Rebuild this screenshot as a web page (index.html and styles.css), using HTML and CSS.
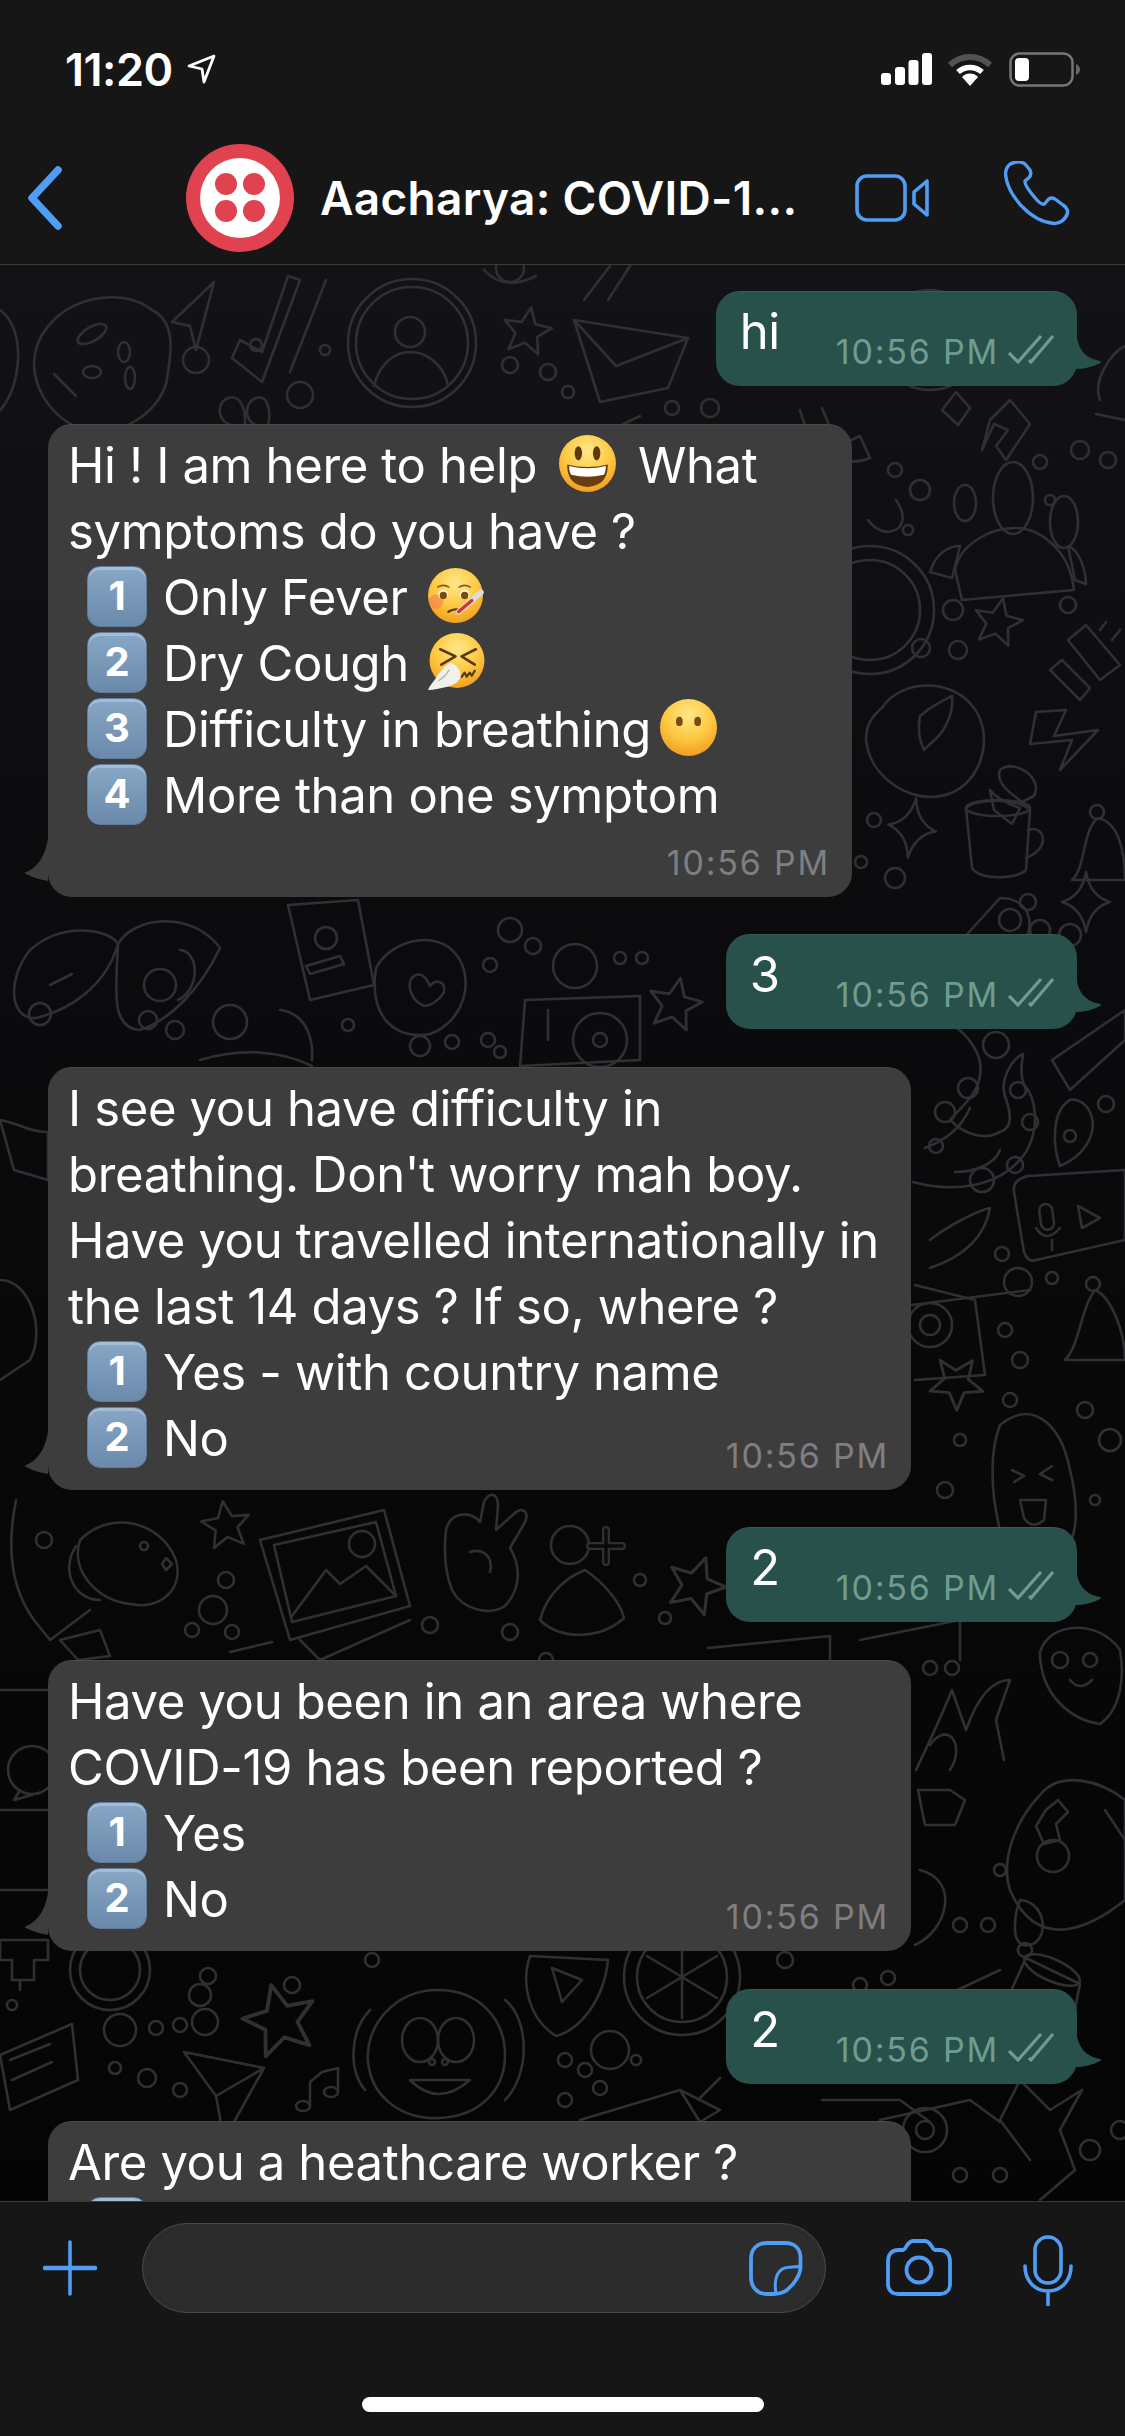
FILE: index.html
```html
<!DOCTYPE html>
<html lang="en">
<head>
<meta charset="utf-8">
<title>WhatsApp chat</title>
<link rel="stylesheet" href="styles.css">
</head>
<body>
<svg class="defs" width="0" height="0" aria-hidden="true">
  <defs>
    <radialGradient id="fg" cx=".5" cy=".28" r=".78">
      <stop offset="0" stop-color="#ffe889"/><stop offset=".55" stop-color="#fdc73f"/><stop offset="1" stop-color="#ee961c"/>
    </radialGradient>
    <symbol id="e-smile" viewBox="0 0 56 56">
      <circle cx="28" cy="28" r="28" fill="url(#fg)"/>
      <ellipse cx="19" cy="18" rx="3.6" ry="7" fill="#5b3a0e"/><ellipse cx="37" cy="18" rx="3.6" ry="7" fill="#5b3a0e"/>
      <path d="M8 29Q28 34 48 29Q48 50 28 51Q8 50 8 29Z" fill="#6b3c10"/>
      <path d="M10 30.5Q28 35 46 30.5Q46 37 44 39Q28 43 12 39Q10 37 10 30.5Z" fill="#fff"/>
    </symbol>
    <symbol id="e-fever" viewBox="0 0 56 56">
      <circle cx="28" cy="28" r="27" fill="url(#fg)"/>
      <circle cx="9" cy="34" r="7" fill="#f4794f" opacity=".55"/>
      <circle cx="16" cy="27" r="5" fill="#fff3c9"/><circle cx="16" cy="28" r="3.6" fill="#7a4a10"/>
      <circle cx="37" cy="27" r="5" fill="#fff3c9"/><circle cx="37" cy="28" r="3.6" fill="#7a4a10"/>
      <path d="M10 20Q16 16 22 20M31 20Q37 16 43 20" fill="none" stroke="#8a5a18" stroke-width="1.6"/>
      <path d="M21 44Q27 40 34 43" fill="none" stroke="#5b3a0e" stroke-width="2.2" stroke-linecap="round"/>
      <path d="M31 44L53 25" stroke="#d9dde0" stroke-width="5.500" stroke-linecap="round"/>
      <path d="M31 44L44 33" stroke="#d7312f" stroke-width="3.200" stroke-linecap="round"/>
    </symbol>
    <symbol id="e-sneeze" viewBox="0 0 56 56">
      <circle cx="28.500" cy="27" r="27" fill="url(#fg)"/>
      <path d="M12 16L27 23L13 31M47 16L33 23L46 31" fill="none" stroke="#5b3a0e" stroke-width="2.6" stroke-linecap="round" stroke-linejoin="round"/>
      <path d="M33 43l3-4 2 4 3-4 2 3 3-5" fill="none" stroke="#5b3a0e" stroke-width="2.200" stroke-linecap="round" stroke-linejoin="round"/>
      <path d="M0 56C3 49 7 47 9 42C12 38 17 32 22 29C27 31 33 36 32 43C30 49 24 52 18 53C12 54 6 56 0 56Z" fill="#f1f1ec"/>
      <path d="M10 47Q17 43 21 36" fill="none" stroke="#b9b9b2" stroke-width="1.4"/>
    </symbol>
    <symbol id="e-nomouth" viewBox="0 0 56 56">
      <circle cx="28" cy="28" r="28" fill="url(#fg)"/>
      <ellipse cx="19" cy="22" rx="3.3" ry="4.600" fill="#7a4a10"/><ellipse cx="37" cy="22" rx="3.3" ry="4.600" fill="#7a4a10"/>
    </symbol>
    <symbol id="ticks" viewBox="0 0 46 30">
      <path d="M1 18L10 27L33 1M21 25L23 27L45 1" fill="none" stroke="#6f9c90" stroke-width="3.200"/>
    </symbol>
    <path id="star" d="M0-24L7-8L24-7L11 4L15 21L0 12L-15 21L-11 4L-24-7L-7-8Z"/>
    <path id="spark" d="M0-30Q4-6 24 0Q4 6 0 30Q-4 6-24 0Q-4-6 0-30Z"/>
  </defs>
</svg>

<div class="app">
  <header class="top">
    <div class="status">
      <div class="clock">
        <span class="clock-time">11:20</span>
        <svg class="loc" width="30" height="30" viewBox="0 0 30 30"><path d="M27 2L2 12L15 15L17 28Z" fill="none" stroke="#fff" stroke-width="2.800" stroke-linejoin="round"/></svg>
      </div>
      <div class="sys">
        <svg width="51" height="33" viewBox="0 0 51 33"><rect x="0" y="21" width="10" height="12" rx="3" fill="#fff"/><rect x="14" y="15" width="10" height="18" rx="3" fill="#fff"/><rect x="27.500" y="8" width="10" height="25" rx="3" fill="#fff"/><rect x="41" y="1" width="10" height="32" rx="3" fill="#fff"/></svg>
        <svg width="46" height="34" viewBox="0 0 46 34"><path d="M3 13A29 29 0 0 1 43 13" fill="none" stroke="#525252" stroke-width="6"/><path d="M11 20A18 18 0 0 1 35 20" fill="none" stroke="#fff" stroke-width="5.500"/><path d="M23 34L15 25A11 11 0 0 1 31 25Z" fill="#fff"/></svg>
        <svg class="batt" width="72" height="35" viewBox="0 0 72 35"><rect x="1.500" y="1.500" width="62" height="32" rx="9" fill="none" stroke="#777" stroke-width="2.500"/><rect x="6" y="6" width="14" height="23" rx="4" fill="#fff"/><path d="M67 12Q71 14 71 17.500Q71 21 67 23Z" fill="#666"/></svg>
      </div>
    </div>
    <nav class="nav">
      <svg class="back" width="36" height="64" viewBox="0 0 36 64"><path d="M31 4L5 32L31 60" fill="none" stroke="#4f9df5" stroke-width="7.500" stroke-linecap="round" stroke-linejoin="round"/></svg>
      <svg class="avatar" width="108" height="108" viewBox="0 0 108 108"><circle cx="54" cy="54" r="54" fill="#e04250"/><circle cx="54" cy="54" r="40" fill="#fff"/><circle cx="40" cy="40" r="11" fill="#e04250"/><circle cx="68" cy="40" r="11" fill="#e04250"/><circle cx="40" cy="67" r="11" fill="#e04250"/><circle cx="68" cy="67" r="11" fill="#e04250"/></svg>
      <div class="title">Aacharya: COVID-1...</div>
      <svg class="video" width="75" height="48" viewBox="0 0 75 48"><rect x="2" y="2" width="48" height="44" rx="10" fill="none" stroke="#4f9df5" stroke-width="3.600"/><path d="M72 7V41L59 30V18Z" fill="none" stroke="#4f9df5" stroke-width="3.600" stroke-linejoin="round"/></svg>
      <svg class="phone" width="66" height="65" viewBox="0 0 66 65"><path d="M10 1.500C5 2.500 1.500 7 1.500 13C3 33 25 60 50 62.500C56 63 62 58 63.500 52C64 48 62 46 59 44L51 38C47.500 36 45 37 43 40L40.500 43C38 44 35.500 42 32 38C26 31 20 23 21 20L24.500 17C27 15 27.500 12.500 26 9L21 3C18 .5 14 .5 10 1.500Z" fill="none" stroke="#4f9df5" stroke-width="3.400" stroke-linejoin="round"/></svg>
    </nav>
  </header>

  <main class="chat">
    <svg class="doodles" viewBox="0 265 1125 1936" width="1125" height="1936" aria-hidden="true">
      <g fill="none" stroke="#303034" stroke-width="2.600" stroke-linecap="round" stroke-linejoin="round">
        <!-- top band -->
        <path d="M52 322C74 296 126 288 152 310C176 322 172 352 166 384C156 414 122 436 88 430C58 424 36 396 34 366C34 348 40 334 52 322Z"/>
        <ellipse cx="92" cy="334" rx="16" ry="7" transform="rotate(-30 92 334)"/><ellipse cx="124" cy="352" rx="6" ry="10"/><ellipse cx="92" cy="372" rx="9" ry="6"/><ellipse cx="130" cy="378" rx="5" ry="11"/><path d="M54 374L76 396"/>
        <path d="M214 282L172 322L190 326L196 350Z"/><path d="M232 358L262 382L300 280L288 276L262 352L240 340Z"/><path d="M290 372L326 280"/>
        <circle cx="412" cy="343" r="64"/><circle cx="412" cy="343" r="56"/><circle cx="410" cy="332" r="15"/><path d="M374 386C380 362 396 352 410 352C426 352 444 364 448 386"/>
        <use href="#star" transform="translate(527 331) rotate(10)"/>
        <path d="M574 320L688 338L668 388L600 402Z"/><path d="M574 320L616 366L688 338"/><path d="M584 300L610 266M608 300L630 266"/>
        <path d="M484 270Q504 292 536 276"/><circle cx="510" cy="268" r="14"/>
        <path d="M245 425C220 432 212 405 228 398C240 394 246 408 245 425ZM268 425C246 432 240 404 256 398C266 394 272 408 268 425Z"/>
        <circle cx="196" cy="360" r="13"/><circle cx="256" cy="345" r="6"/><circle cx="300" cy="395" r="13"/><circle cx="325" cy="350" r="5"/><circle cx="510" cy="365" r="8"/><circle cx="548" cy="372" r="8"/><circle cx="568" cy="392" r="6"/><circle cx="672" cy="408" r="7"/><circle cx="710" cy="408" r="9"/>
        <path d="M590 440L640 416M800 410C810 450 840 470 870 458L860 436L838 446L822 408"/>
        <path d="M942 410L958 425L970 408L956 392ZM990 420L1010 400L1030 424L1006 460L996 446L1008 430L994 424L982 450Z"/>
        <path d="M1100 400C1092 380 1112 352 1125 346"/><path d="M1096 414L1125 420"/><circle cx="930" cy="340" r="50"/>
        <path d="M0 310C28 330 20 390 0 410"/>
        <!-- right of bubble one -->
        <ellipse cx="965" cy="503" rx="11" ry="18"/><ellipse cx="1013" cy="498" rx="20" ry="36"/><ellipse cx="1064" cy="522" rx="14" ry="26"/>
        <path d="M955 570C960 544 990 528 1015 528C1040 528 1070 550 1074 590L962 600Z"/><path d="M930 572C936 552 950 546 960 546L952 578ZM1068 546C1080 550 1086 572 1086 584L1075 580Z"/>
        <path d="M868 520C886 544 916 528 896 500"/><circle cx="870" cy="610" r="50"/><circle cx="870" cy="610" r="64"/>
        <use href="#star" transform="translate(998 622) rotate(12)"/><circle cx="953" cy="610" r="10"/><circle cx="1068" cy="605" r="8"/><circle cx="921" cy="648" r="9"/><circle cx="958" cy="650" r="9"/>
        <circle cx="895" cy="470" r="7"/><circle cx="920" cy="490" r="10"/><circle cx="1040" cy="462" r="7"/><circle cx="1080" cy="450" r="9"/><circle cx="1108" cy="460" r="8"/><circle cx="908" cy="530" r="5"/><circle cx="1050" cy="500" r="5"/>
        <path d="M1068 640L1086 625L1120 665L1100 680ZM1100 630L1106 622M1112 640L1120 630M1062 660L1090 688L1080 700L1050 670Z"/>
        <path d="M882 708C900 680 950 676 974 708C996 738 980 790 940 796C910 802 870 778 866 740C866 725 872 716 882 708Z"/>
        <path d="M920 716C934 704 948 698 952 696C954 712 946 732 930 744L924 750C918 738 918 726 920 716Z"/>
        <path d="M1036 712L1066 710L1054 736L1098 730L1060 770L1072 740L1030 744Z"/>
        <path d="M1000 770C1014 758 1044 778 1034 796L1022 802C1006 790 996 782 1000 770ZM990 790C998 800 1014 806 1020 808L1012 824L994 810Z"/>
        <path d="M966 808C975 798 1020 798 1030 810L1026 870C1016 880 980 880 972 868Z"/><ellipse cx="998" cy="808" rx="32" ry="8"/><path d="M1028 830C1044 824 1052 848 1026 858"/>
        <path d="M1098 818C1118 822 1125 850 1125 880H1072C1086 868 1082 830 1098 818Z"/><circle cx="1097" cy="812" r="7"/>
        <use href="#spark" transform="translate(912 828) rotate(8)"/><use href="#spark" transform="translate(1086 902)"/>
        <circle cx="874" cy="820" r="7"/><circle cx="861" cy="862" r="6"/><circle cx="895" cy="878" r="10"/><circle cx="1040" cy="930" r="10"/><circle cx="1070" cy="935" r="11"/><circle cx="1028" cy="902" r="8"/>
        <path d="M1000 898C1026 898 1040 920 1020 950C1008 970 992 990 982 1010L960 942Z"/><circle cx="1010" cy="920" r="11"/>
        <!-- mid left -->
        <path d="M30 950C64 920 110 930 118 944C106 986 70 1010 36 1018C10 1020 6 980 30 950Z"/><path d="M50 985L72 974"/><path d="M118 944C134 916 192 910 220 948C200 990 170 1020 140 1030C110 1028 116 990 118 944Z"/><path d="M180 950C200 952 200 990 178 1000"/><circle cx="160" cy="985" r="16"/>
        <path d="M288 905L358 900L374 985L310 1000Z"/><circle cx="326" cy="938" r="11"/><path d="M306 966L340 956L344 964L310 974Z"/>
        <circle cx="510" cy="930" r="12"/><circle cx="533" cy="946" r="8"/><circle cx="575" cy="966" r="22"/><circle cx="620" cy="958" r="6"/><circle cx="642" cy="958" r="6"/><circle cx="490" cy="965" r="7"/>
        <path d="M376 968C390 942 430 930 452 950C476 972 468 1020 430 1034C398 1040 368 1020 376 968Z"/><path d="M424 1006C410 1000 404 980 416 975C424 972 428 982 430 986C436 978 446 982 444 992C440 1000 430 1006 424 1006Z"/>
        <circle cx="148" cy="1020" r="9"/><circle cx="175" cy="1030" r="9"/><circle cx="230" cy="1022" r="17"/><circle cx="40" cy="1014" r="11"/><circle cx="348" cy="1025" r="6"/><circle cx="488" cy="1040" r="7"/>
        <path d="M525 1000L640 996L640 1060L520 1066ZM548 1010V1040"/><circle cx="600" cy="1040" r="27"/><circle cx="600" cy="1040" r="7"/>
        <use href="#star" transform="translate(675 1004) rotate(12) scale(1.100)"/>
        <path d="M280 1010C300 1012 314 1030 312 1060"/><path d="M200 1060C240 1048 280 1050 312 1066"/>
        <circle cx="420" cy="1046" r="10"/><circle cx="452" cy="1042" r="7"/><circle cx="500" cy="1052" r="6"/>
        <path d="M0 1120C22 1124 28 1132 48 1132V1180L14 1170Z"/><path d="M0 1280C30 1280 46 1330 30 1360L0 1380"/>
        <!-- right tentacle -->
        <path d="M913 1182C950 1192 1000 1190 1026 1152C1042 1124 1034 1095 1024 1085C1018 1070 1024 1055 1023 1054C1010 1060 1000 1082 1005 1096C1012 1116 1012 1128 1000 1132C986 1140 966 1136 950 1120C964 1104 984 1090 980 1062C976 1044 960 1028 952 1026"/>
        <path d="M925 1148C945 1140 960 1130 970 1108M955 1172C975 1172 995 1164 1000 1150"/><circle cx="968" cy="1088" r="10"/><circle cx="945" cy="1112" r="10"/><circle cx="936" cy="1146" r="7"/><circle cx="1018" cy="1090" r="8"/><circle cx="1030" cy="1122" r="8"/><circle cx="1015" cy="1165" r="8"/><circle cx="982" cy="1180" r="12"/>
        <path d="M1070 1100C1052 1110 1052 1144 1060 1166C1080 1158 1100 1136 1090 1112C1086 1104 1078 1098 1070 1100Z"/><circle cx="1070" cy="1136" r="6"/>
        <path d="M1052 1060L1125 1010V1040L1070 1090Z"/><circle cx="1106" cy="1104" r="8"/><circle cx="996" cy="1045" r="13"/>
        <path d="M1028 1176L1125 1170V1240L1036 1260C1030 1262 1026 1258 1024 1252L1014 1192C1012 1182 1020 1178 1028 1176Z"/><rect x="1040" y="1204" width="13" height="26" rx="6.500" transform="rotate(-8 1046 1216)"/><path d="M1036 1228Q1046 1244 1060 1228M1052 1240V1250M1078 1206L1100 1218L1082 1228Z"/>
        <path d="M930 1240C950 1224 980 1210 990 1208C985 1236 966 1256 930 1268"/><circle cx="1002" cy="1254" r="7"/><circle cx="1018" cy="1282" r="14"/><circle cx="1052" cy="1278" r="6"/>
        <path d="M912 1305L1030 1290M1095 1290C1110 1296 1125 1330 1125 1360H1065C1080 1345 1080 1310 1095 1290Z"/><circle cx="1093" cy="1284" r="7"/>
        <path d="M915 1285L975 1300L985 1375L915 1380"/><circle cx="930" cy="1325" r="22"/><circle cx="930" cy="1325" r="10"/>
        <use href="#star" transform="translate(957 1382) rotate(36) scale(1.100)"/><circle cx="1020" cy="1360" r="8"/><circle cx="1005" cy="1330" r="7"/><circle cx="1010" cy="1400" r="7"/>
        <path d="M1000 1425C1030 1400 1060 1420 1070 1470C1080 1510 1076 1540 1066 1545L1000 1530C990 1490 990 1450 1000 1425Z"/><path d="M1012 1470L1024 1476L1014 1482M1052 1466L1040 1474L1052 1480M1020 1500H1046L1044 1520Q1032 1530 1024 1518Z"/>
        <circle cx="960" cy="1440" r="6"/><circle cx="945" cy="1490" r="8"/><circle cx="1110" cy="1440" r="11"/><circle cx="1085" cy="1410" r="8"/><circle cx="1095" cy="1500" r="5"/>
        <!-- lower left -->
        <path d="M16 1500C6 1550 12 1590 34 1620L50 1640L90 1610"/><path d="M80 1540C110 1510 160 1520 176 1560C184 1590 160 1610 130 1604C96 1600 70 1570 80 1540Z"/><path d="M76 1546C60 1570 74 1600 100 1600"/><circle cx="144" cy="1546" r="4"/><path d="M166 1558l6 6-6 6-4-6z"/>
        <use href="#star" transform="translate(226 1525) rotate(-8)"/><circle cx="44" cy="1540" r="8"/><circle cx="213" cy="1610" r="14"/><circle cx="226" cy="1580" r="8"/><circle cx="192" cy="1630" r="7"/><circle cx="232" cy="1632" r="7"/>
        <path d="M260 1540L384 1510L410 1606L290 1640Z"/><path d="M274 1545L376 1522L396 1596L292 1622Z"/><path d="M292 1616L326 1570L340 1584L366 1566L396 1596"/><circle cx="362" cy="1544" r="13"/><path d="M300 1640L320 1660L410 1620"/>
        <path d="M446 1530C450 1512 470 1510 480 1522L484 1502C490 1490 498 1494 498 1506L496 1530L516 1512C524 1506 530 1514 524 1524L510 1548C522 1568 520 1590 505 1606C490 1616 462 1610 452 1590C444 1570 444 1548 446 1530Z"/><path d="M470 1552C482 1548 494 1556 490 1572"/>
        <circle cx="570" cy="1545" r="19"/><path d="M540 1620C548 1590 570 1576 585 1570C600 1580 620 1600 624 1618C600 1640 560 1640 540 1620Z"/><path d="M606 1530V1562M590 1546H622" stroke-width="8"/><path d="M606 1530V1562M590 1546H622" stroke="#0a0a0b" stroke-width="3.400"/>
        <use href="#star" transform="translate(696 1585) rotate(20) scale(1.200)"/><circle cx="665" cy="1618" r="6"/><circle cx="640" cy="1580" r="6"/>
        <circle cx="430" cy="1625" r="8"/><circle cx="510" cy="1632" r="8"/><circle cx="546" cy="1660" r="7"/>
        <path d="M60 1640L100 1630L110 1656L78 1660ZM230 1652L272 1642"/><path d="M708 1648L830 1636L830 1660M860 1640L960 1620L960 1660"/>
        <circle cx="930" cy="1668" r="7"/><circle cx="952" cy="1668" r="7"/>
        <!-- right lower -->
        <path d="M1040 1652C1050 1620 1100 1620 1120 1650C1125 1680 1120 1710 1100 1724C1072 1720 1040 1696 1040 1652Z"/><circle cx="1060" cy="1660" r="8"/><circle cx="1090" cy="1660" r="7"/><path d="M1070 1680Q1080 1692 1092 1680"/>
        <path d="M916 1770C930 1740 940 1720 952 1690L966 1730C980 1690 996 1680 1010 1680L996 1720L1004 1760"/><path d="M930 1745C948 1720 966 1745 950 1770"/><path d="M918 1790H950L965 1800L955 1825H925Z"/>
        <path d="M1040 1795C1060 1770 1100 1780 1125 1800V1900C1100 1920 1040 1960 1010 1890C1000 1860 1016 1820 1040 1795Z"/><path d="M1046 1810L1058 1800L1068 1812L1056 1824L1060 1840L1044 1844L1036 1826Z"/><circle cx="1053" cy="1856" r="16"/><path d="M1105 1810L1125 1840"/>
        <path d="M920 1870C960 1880 948 1930 915 1945M1020 1900C1050 1902 1050 1950 1022 1945C1010 1938 1016 1910 1020 1900Z"/>
        <circle cx="960" cy="1925" r="7"/><circle cx="988" cy="1925" r="7"/><circle cx="1000" cy="1870" r="6"/><circle cx="1025" cy="1950" r="7"/>
        <!-- left behind in3 -->
        <path d="M0 1690H48M0 1810H48M0 1890H48"/><circle cx="32" cy="1770" r="24"/><path d="M20 1790L14 1800L32 1795"/>
        <path d="M0 1940H48V1960H34V1980H12V1960H0ZM20 1980V1990"/>
        <!-- bottom band -->
        <circle cx="110" cy="1970" r="30"/><circle cx="110" cy="1970" r="40"/><circle cx="200" cy="1995" r="11"/><circle cx="208" cy="1976" r="8"/><circle cx="292" cy="1985" r="8"/><circle cx="372" cy="1960" r="7"/>
        <path d="M530 1956L608 1960C604 2000 580 2030 556 2036C530 2020 520 1985 530 1956Z"/><path d="M552 1968L582 1980L562 2002Z"/>
        <circle cx="682" cy="1977" r="58"/><circle cx="682" cy="1977" r="45"/><path d="M682 1977V1936M682 1977V2018M682 1977L647 1956M682 1977L717 1956M682 1977L647 1998M682 1977L717 1998"/>
        <circle cx="860" cy="1985" r="7"/><circle cx="888" cy="1978" r="7"/><circle cx="785" cy="1960" r="8"/>
        <path d="M1000 2015L1026 1958L1080 1984L1066 2054C1040 2060 1010 2050 1000 2015Z"/><ellipse cx="1052" cy="1970" rx="30" ry="11" transform="rotate(24 1052 1970)"/><path d="M936 2000L1000 1970"/>
        <use href="#star" transform="translate(280 2020) rotate(-14) scale(1.500)"/><circle cx="120" cy="2030" r="16"/><circle cx="156" cy="2028" r="7"/><circle cx="180" cy="2025" r="7"/><circle cx="205" cy="2022" r="13"/><circle cx="12" cy="2005" r="5"/>
        <path d="M0 2055L72 2024L78 2080L10 2110ZM10 2060L50 2044M12 2080L52 2062"/><circle cx="115" cy="2068" r="6"/><circle cx="147" cy="2078" r="9"/><circle cx="180" cy="2090" r="7"/>
        <path d="M184 2052L264 2068L224 2140L216 2096Z"/><path d="M216 2096L264 2068"/><path d="M310 2082L322 2072L338 2068V2090M310 2082V2104"/><ellipse cx="303" cy="2106" rx="7" ry="5"/><ellipse cx="331" cy="2092" rx="7" ry="5"/>
        <path d="M438 1990C395 1990 365 2025 368 2062C372 2100 405 2120 440 2118C480 2116 505 2090 505 2055C505 2020 480 1990 438 1990Z"/><ellipse cx="420" cy="2040" rx="18" ry="22"/><ellipse cx="456" cy="2040" rx="18" ry="22"/><path d="M410 2080Q438 2108 470 2080Z"/><circle cx="432" cy="2062" r="3"/><circle cx="445" cy="2062" r="3"/><path d="M505 2000C530 2020 530 2075 505 2100M370 2010C350 2030 348 2070 365 2090"/>
        <circle cx="565" cy="2060" r="7"/><circle cx="585" cy="2070" r="7"/><circle cx="610" cy="2050" r="19"/><circle cx="636" cy="2060" r="5"/><circle cx="565" cy="2100" r="7"/><circle cx="600" cy="2088" r="7"/>
        <path d="M580 2120L680 2090L720 2110L700 2122M680 2090L700 2122"/><path d="M822 2100H900L930 2122M700 2098L720 2078"/>
        <path d="M880 2120L970 2100L1000 2122"/><circle cx="925" cy="2130" r="22"/><circle cx="925" cy="2130" r="9"/>
        <path d="M1000 2120L1020 2080L1050 2110L1082 2090L1060 2130L1075 2170L1040 2200M1000 2120L1030 2160"/><circle cx="1090" cy="2150" r="10"/><circle cx="1120" cy="2130" r="9"/><circle cx="1000" cy="2175" r="7"/><circle cx="960" cy="2175" r="7"/>
      </g>
    </svg>

    <div class="msg out"><span class="txt">hi</span><span class="time">10:56 PM</span><svg class="tick"><use href="#ticks"/></svg>
      <svg class="tail" width="26" height="40" viewBox="0 0 26 40"><path d="M0 0C1 18 8 28 24 31Q26 32 24 33C16 37 8 39 0 39Z"/></svg></div>

    <div class="msg in narrow">
      <div class="line">Hi ! I am here to help<svg class="emoji smile"><use href="#e-smile"/></svg>What</div>
      <div class="line">symptoms do you have ?</div>
      <div class="line"><span class="key">1</span>Only Fever<svg class="emoji after"><use href="#e-fever"/></svg></div>
      <div class="line"><span class="key">2</span>Dry Cough<svg class="emoji after"><use href="#e-sneeze"/></svg></div>
      <div class="line"><span class="key">3</span>Difficulty in breathing<svg class="emoji tight"><use href="#e-nomouth"/></svg></div>
      <div class="line"><span class="key">4</span>More than one symptom</div>
      <div class="stamp"><span class="time">10:56 PM</span></div>
      <svg class="tail" width="24" height="43" viewBox="0 0 24 43"><path d="M24 0C22 16 14 30 2 34Q0 35 2 36C10 40 18 42 24 43Z"/></svg>
    </div>

    <div class="msg out"><span class="txt">3</span><span class="time">10:56 PM</span><svg class="tick"><use href="#ticks"/></svg>
      <svg class="tail" width="26" height="40" viewBox="0 0 26 40"><path d="M0 0C1 18 8 28 24 31Q26 32 24 33C16 37 8 39 0 39Z"/></svg></div>

    <div class="msg in">
      <div class="line">I see you have difficulty in</div>
      <div class="line">breathing. Don't worry mah boy.</div>
      <div class="line">Have you travelled internationally in</div>
      <div class="line">the last 14 days ? If so, where ?</div>
      <div class="line"><span class="key">1</span>Yes - with country name</div>
      <div class="line last"><span><span class="key">2</span>No</span><span class="time">10:56 PM</span></div>
      <svg class="tail" width="24" height="43" viewBox="0 0 24 43"><path d="M24 0C22 16 14 30 2 34Q0 35 2 36C10 40 18 42 24 43Z"/></svg>
    </div>

    <div class="msg out"><span class="txt">2</span><span class="time">10:56 PM</span><svg class="tick"><use href="#ticks"/></svg>
      <svg class="tail" width="26" height="40" viewBox="0 0 26 40"><path d="M0 0C1 18 8 28 24 31Q26 32 24 33C16 37 8 39 0 39Z"/></svg></div>

    <div class="msg in">
      <div class="line">Have you been in an area where</div>
      <div class="line">COVID-19 has been reported ?</div>
      <div class="line"><span class="key">1</span>Yes</div>
      <div class="line last"><span><span class="key">2</span>No</span><span class="time">10:56 PM</span></div>
      <svg class="tail" width="24" height="43" viewBox="0 0 24 43"><path d="M24 0C22 16 14 30 2 34Q0 35 2 36C10 40 18 42 24 43Z"/></svg>
    </div>

    <div class="msg out"><span class="txt">2</span><span class="time">10:56 PM</span><svg class="tick"><use href="#ticks"/></svg>
      <svg class="tail" width="26" height="40" viewBox="0 0 26 40"><path d="M0 0C1 18 8 28 24 31Q26 32 24 33C16 37 8 39 0 39Z"/></svg></div>

    <div class="msg in">
      <div class="line">Are you a heathcare worker ?</div>
      <div class="line"><span class="key"></span></div>
    </div>
  </main>

  <footer class="bottom">
    <div class="composer">
      <svg class="plus" width="54" height="56" viewBox="0 0 54 56"><path d="M27 2V54" stroke="#4f9df5" stroke-width="3.600" stroke-linecap="round"/><path d="M2 28H52" stroke="#4f9df5" stroke-width="4.600" stroke-linecap="round"/></svg>
      <div class="field">
        <svg width="54" height="55" viewBox="0 0 54 55"><path d="M18 2H36C46 2 51.500 8 51.500 17V26C51.500 33 48 38 44 43L38 49C34 52 30 53 24 53H18C8 53 2 46 2 36V18C2 8 8 2 18 2Z" fill="none" stroke="#4f9df5" stroke-width="3.800"/><path d="M27 52C25 42 27 33 32 29C37 25 45 27 51 25" fill="none" stroke="#4f9df5" stroke-width="3"/></svg>
      </div>
      <svg class="cam" width="66" height="58" viewBox="0 0 66 58"><path d="M12 12H17C20 12 21 3 27 3H39C45 3 46 12 49 12H54C60 12 64 16 64 24V46C64 52 60 56 54 56H12C6 56 2 52 2 46V24C2 16 6 12 12 12Z" fill="none" stroke="#4f9df5" stroke-width="3.800" stroke-linejoin="round"/><circle cx="33" cy="32" r="12.500" fill="none" stroke="#4f9df5" stroke-width="3.800"/></svg>
      <svg class="mic" width="50" height="71" viewBox="0 0 50 71"><rect x="12" y="2" width="26" height="46" rx="13" fill="none" stroke="#4f9df5" stroke-width="3.600"/><path d="M2 31C2 46 12 56 25 56C38 56 48 46 48 31M25 56V70" fill="none" stroke="#4f9df5" stroke-width="3.600" stroke-linecap="round"/></svg>
    </div>
    <div class="home"></div>
  </footer>
</div>
</body>
</html>
```

FILE: styles.css
```css
* { box-sizing: border-box; }
html, body { margin: 0; padding: 0; background: #161616; }
body { font-family: Inter, "Noto Sans", "Liberation Sans", sans-serif; color: #fff; }
.defs { position: absolute; }

.app { width: 1125px; height: 2436px; display: flex; flex-direction: column; overflow: hidden; }

.top { height: 265px; flex: none; background: #161616; border-bottom: 1px solid #3a3a3a; }
.status { height: 120px; display: flex; justify-content: space-between; padding: 52px 44px 0 65px; }
.clock { display: flex; align-items: flex-start; gap: 14px; }
.clock-time { font-size: 45px; font-weight: 600; line-height: 36px; letter-spacing: -.5px; }
.loc { margin-top: 2px; }
.sys { display: flex; align-items: flex-start; gap: 15px; }
.batt { margin-left: 1px; }

.nav { display: flex; align-items: center; height: 144px; padding-left: 27px; padding-top: 12px; }
.back { flex: none; }
.avatar { flex: none; margin-left: 123px; }
.title { flex: none; width: 500px; margin-left: 26px; font-size: 46px; font-weight: 600; letter-spacing: .3px; white-space: nowrap; }
.video { flex: none; margin-left: 35px; }
.phone { flex: none; margin-left: 74px; margin-top: -10px; }

.chat { flex: 1; min-height: 0; position: relative; overflow: hidden; display: flex; flex-direction: column; gap: 37.6px; padding-top: 26px; background: linear-gradient(#121217 0, #0c0c0f 30%, #080808 60%, #050505 100%); }
.doodles { position: absolute; left: 0; top: 0; }

.msg { position: relative; flex: none; border-radius: 24px; }
.tail { position: absolute; bottom: 16px; }

.out { align-self: flex-end; margin-right: 48px; height: 95px; display: flex; padding: 7px 23px 0 24px; background: #27514a; border-top: 1px solid #2f5f56; }
.out .tail { right: -25px; fill: #27514a; }
.txt { font-size: 49px; line-height: 66px; letter-spacing: -.35px; margin-right: 56px; }
.tick { width: 46px; height: 30px; margin: 36px 0 0 9px; flex: none; }

.time { font-size: 34px; line-height: 40px; margin-top: 33px; letter-spacing: 1.800px; white-space: nowrap; color: #7f7f82; }
.out .time { color: #6f9c90; }

.in { width: 863px; align-self: flex-start; margin-left: 48px; padding: 8px 22px 18px 20px; background: #3d3d3d; border-top: 1px solid #4a4a4a; }
.in.narrow { width: 804px; }
.in .tail { left: -24px; fill: #3d3d3d; }
.line { height: 66px; font-size: 49px; line-height: 66px; letter-spacing: -.35px; white-space: nowrap; }
.last { display: flex; justify-content: space-between; }
.last .time { margin-top: 30px; }
.stamp { height: 50px; display: flex; justify-content: flex-end; }
.stamp .time { margin-top: 14px; }

.key { display: inline-block; overflow: hidden; width: 60px; height: 61px; margin: 0 16px 0 19px; vertical-align: -12px; border-radius: 13px; border: 1px solid #5f7d9f; background: linear-gradient(#88a7c6, #6b89ab); box-shadow: inset 0 3px 0 #a3bdd6; font-size: 40px; font-weight: 700; line-height: 57px; letter-spacing: 0; text-align: center; }
.emoji { display: inline-block; width: 57px; height: 57px; vertical-align: -9px; }
.smile { margin: 0 22px; }
.after { margin-left: 19px; }
.tight { margin-left: 9px; }

.bottom { height: 235px; flex: none; background: #161616; border-top: 1px solid #3a3a3a; display: flex; flex-direction: column; }
.composer { display: flex; align-items: flex-start; padding: 21px 0 0 43px; }
.plus { margin: 17px 0 0; flex: none; }
.field { width: 684px; height: 90px; margin-left: 45px; flex: none; border: 1.500px solid #4a4a4a; border-radius: 45px; background: #2c2c2c; display: flex; align-items: center; justify-content: flex-end; padding-right: 22px; }
.cam { margin: 15px 0 0 60px; flex: none; }
.mic { margin: 12px 0 0 71px; flex: none; }
.home { width: 402px; height: 15px; margin: 84px 0 0 362px; border-radius: 8px; background: #fff; }
```
